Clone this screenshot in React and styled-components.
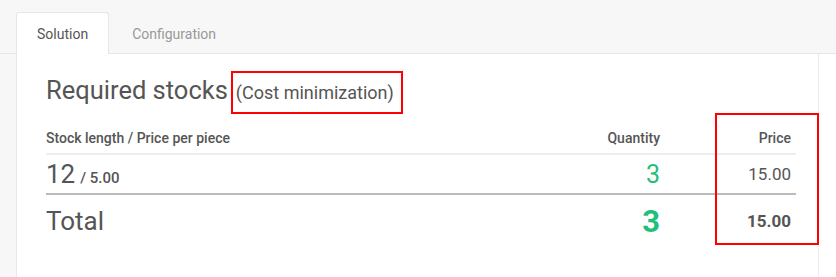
import React from 'react';
import styled, { createGlobalStyle } from 'styled-components';

const GlobalStyle = createGlobalStyle`
  html, body {
    margin: 0;
    padding: 0;
    background: #fff;
  }
  body {
    font-family: Roboto, "Liberation Sans", Arial, sans-serif;
    color: #555;
  }
`;

const Page = styled.div`
  width: 836px;
  height: 277px;
  overflow: hidden;
  background: linear-gradient(to right, #f7f7f7 16px, #fff 16px);
`;

const TabBar = styled.div`
  display: flex;
  align-items: flex-end;
  height: 54px;
  padding-left: 16px;
  background: #f7f7f7;
  border-bottom: 1px solid #e6e6e6;
  box-sizing: border-box;
`;

const Tab = styled.div`
  height: 42px;
  box-sizing: border-box;
  padding: 0 20px;
  margin-right: 2px;
  margin-bottom: -1px;
  display: flex;
  align-items: center;
  font-size: 14px;
  border: 1px solid ${p => (p.active ? '#e6e6e6' : 'transparent')};
  border-bottom: none;
  border-radius: 3px 3px 0 0;
  background: ${p => (p.active ? '#fff' : 'transparent')};
  color: ${p => (p.active ? '#555' : '#999')};
`;

const Panel = styled.div`
  position: relative;
  width: 803px;
  height: 223px;
  margin-left: 16px;
  box-sizing: border-box;
  border-left: 1px solid #e9e9e9;
  border-right: 1px solid #ececec;
  background: #fff;
  padding: 15px 22px 0 29px;
`;

const Heading = styled.h2`
  margin: 0;
  font-size: 25.5px;
  font-weight: 400;
  color: #555;
  line-height: 43px;
`;

const Note = styled.span`
  display: inline-block;
  margin-left: 3px;
  padding: 0 7px 0 3px;
  border: 2px solid #f00;
  font-size: 18px;
  line-height: 39px;
  color: #555;
`;

const Table = styled.table`
  width: 100%;
  margin-top: 4px;
  border-collapse: collapse;
`;

const Th = styled.th`
  font-size: 14px;
  font-weight: 500;
  color: #555;
  text-align: ${p => (p.right ? 'right' : 'left')};
  width: ${p => p.w || 'auto'};
  padding: 12px 5px 7px ${p => (p.right ? '5px' : '0')};
  border-bottom: 2px solid #eee;
`;

const Td = styled.td`
  text-align: ${p => (p.right ? 'right' : 'left')};
  padding: ${p => (p.total ? '6px' : '4px')} 5px 4px ${p => (p.right ? '5px' : '0')};
  border-bottom: ${p => (p.line ? '2px solid #bbb' : 'none')};
  height: ${p => (p.total ? '40px' : '26px')};
  vertical-align: middle;
`;

const Big = styled.span`
  font-size: 26px;
  color: #555;
`;

const Small = styled.span`
  font-size: 15px;
  font-weight: 500;
  margin-left: 5px;
`;

const Qty = styled.span`
  font-size: ${p => (p.bold ? '31px' : '25px')};
  font-weight: ${p => (p.bold ? 700 : 400)};
  color: #1fbf7c;
`;

const Price = styled.span`
  font-size: 17px;
  font-weight: ${p => (p.bold ? 700 : 400)};
  color: #555;
`;

const Marker = styled.div`
  position: absolute;
  left: 698px;
  top: 59px;
  width: 104px;
  height: 132px;
  box-sizing: border-box;
  border: 2px solid #f00;
  pointer-events: none;
`;

export default function App() {
  return (
    <Page>
      <GlobalStyle />
      <TabBar>
        <Tab active>Solution</Tab>
        <Tab>Configuration</Tab>
      </TabBar>
      <Panel>
        <Heading>
          Required stocks<Note>(Cost minimization)</Note>
        </Heading>
        <Table>
          <thead>
            <tr>
              <Th>Stock length / Price per piece</Th>
              <Th right>Quantity</Th>
              <Th right w="121px">Price</Th>
            </tr>
          </thead>
          <tbody>
            <tr>
              <Td line><Big>12</Big><Small>/ 5.00</Small></Td>
              <Td line right><Qty>3</Qty></Td>
              <Td line right><Price>15.00</Price></Td>
            </tr>
            <tr>
              <Td total><Big>Total</Big></Td>
              <Td total right><Qty bold>3</Qty></Td>
              <Td total right><Price bold>15.00</Price></Td>
            </tr>
          </tbody>
        </Table>
        <Marker />
      </Panel>
    </Page>
  );
}
